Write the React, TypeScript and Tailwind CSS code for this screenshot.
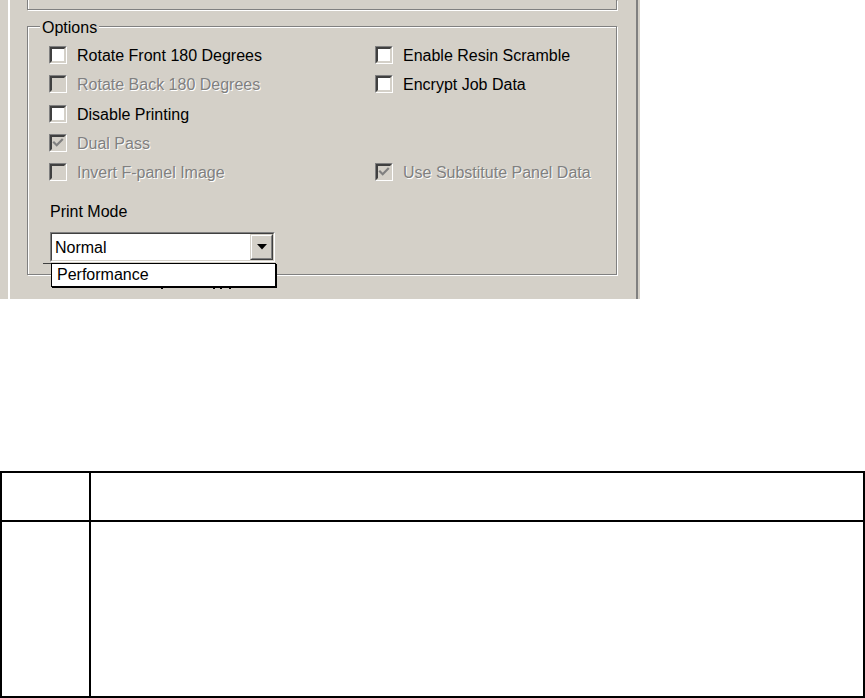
import React from 'react';

const FONT = "font-['Liberation_Sans',Arial,sans-serif]";

interface CheckProps {
  label?: string;
  checked?: boolean;
  disabled?: boolean;
}

const CheckBox: React.FC<CheckProps> = ({ label, checked, disabled }) => {
  if (!label) return <div />;
  return (
    <div className="flex h-[18px] items-center">
      <div className="h-[18px] w-[18px] shrink-0 border border-t-[#808080] border-l-[#808080] border-b-white border-r-white">
        <div
          className={`h-full w-full border-2 border-t-[#404040] border-l-[#404040] border-b-[#d4d0c8] border-r-[#d4d0c8] ${
            disabled ? 'bg-[#d4d0c8]' : 'bg-white'
          }`}
        >
          {checked && (
            <svg viewBox="0 0 12 12" className="h-full w-full">
              <path
                d="M2 5.5 L4.7 8.2 L10 2.8"
                fill="none"
                stroke={disabled ? '#808080' : '#000'}
                strokeWidth="2.2"
                strokeLinecap="square"
              />
            </svg>
          )}
        </div>
      </div>
      <span
        className={`ml-[10px] mt-[1px] whitespace-nowrap text-[16px] leading-[18px] ${
          disabled ? 'text-[#808080] [text-shadow:1px_1px_0_#fff]' : 'text-black'
        }`}
      >
        {label}
      </span>
    </div>
  );
};

const rows: [CheckProps, CheckProps][] = [
  [{ label: 'Rotate Front 180 Degrees' }, { label: 'Enable Resin Scramble' }],
  [{ label: 'Rotate Back 180 Degrees', disabled: true }, { label: 'Encrypt Job Data' }],
  [{ label: 'Disable Printing' }, {}],
  [{ label: 'Dual Pass', checked: true, disabled: true }, {}],
  [
    { label: 'Invert F-panel Image', disabled: true },
    { label: 'Use Substitute Panel Data', checked: true, disabled: true },
  ],
];

const rowHeights = ['h-[29px]', 'h-[30px]', 'h-[29px]', 'h-[29px]', 'h-[18px]'];

const PrintModeCombo: React.FC = () => (
  <div className="relative ml-[1px] mt-[11px] h-[30px] w-[225px]">
    <div className="h-full w-full border border-t-[#808080] border-l-[#808080] border-b-white border-r-white">
      <div className="flex h-full w-full border border-t-[#404040] border-l-[#404040] border-b-[#d4d0c8] border-r-[#d4d0c8] bg-white">
        <span className="flex-1 pl-[3px] pt-[1px] text-[16px] leading-[26px] text-black">Normal</span>
        <div className="h-full w-[23px] border border-t-[#d4d0c8] border-l-[#d4d0c8] border-b-[#404040] border-r-[#404040]">
          <div className="flex h-full w-full items-center justify-center border border-t-white border-l-white border-b-[#808080] border-r-[#808080] bg-[#d4d0c8]">
            <svg width="10" height="6" viewBox="0 0 10 6">
              <path d="M0 0 H10 L5 5.5 Z" fill="#000" />
            </svg>
          </div>
        </div>
      </div>
    </div>

    {/* hidden text peeking below the open list */}
    <div className="absolute left-[111px] top-[55px] h-[2px] w-[2px] bg-black" />
    <div className="absolute left-[163px] top-[55px] h-[2px] w-[2px] bg-black" />
    <div className="absolute left-[170px] top-[55px] h-[2px] w-[2px] bg-black" />
    <div className="absolute left-[179px] top-[55px] h-[2px] w-[2px] bg-black" />

    {/* open dropdown list */}
    <div className="absolute left-[-7px] top-[31px] h-[1px] w-[8px] bg-[#404040]" />
    <div className="absolute left-[1px] top-[31px] h-[24px] w-[225px] border border-black bg-white pl-[5px] shadow-[1px_1px_0_#000]">
      <span className="block pt-[1px] text-[16px] leading-[20px] text-black">Performance</span>
    </div>
  </div>
);

const App: React.FC = () => {
  return (
    <div className={`h-[698px] w-[865px] bg-white ${FONT}`}>
      <div className="h-[299px] w-[640px] bg-[#d4d0c8] pl-[8px]">
        <div className="h-full w-[630px] border-l-2 border-r-2 border-l-white border-r-[#808080] pl-[17px]">
          <div className="h-[10px] w-[590px] border-x border-b border-[#808080] shadow-[inset_1px_0_0_#fff,1px_1px_0_#fff]" />

          <div className="relative mt-[16px] h-[249px] w-[590px] border border-[#808080] pl-[21px] pt-[19px] shadow-[inset_1px_1px_0_#fff,1px_1px_0_#fff]">
            <span className="absolute left-[12px] top-[-8px] bg-[#d4d0c8] px-[2px] text-[16px] leading-[18px] text-black">
              Options
            </span>

            {rows.map((pair, i) => (
              <div key={i} className={`grid grid-cols-[326px_1fr] ${rowHeights[i]}`}>
                <CheckBox {...pair[0]} />
                <CheckBox {...pair[1]} />
              </div>
            ))}

            <div className="ml-[1px] mt-[22px] text-[16px] leading-[18px] text-black">Print Mode</div>
            <PrintModeCombo />
          </div>
        </div>
      </div>

      <div className="mt-[172px] h-[227px] w-[865px] border-2 border-black">
        <div className="grid h-[49px] grid-cols-[89px_1fr] border-b-2 border-black">
          <div className="border-r-2 border-black" />
          <div />
        </div>
        <div className="grid h-[174px] grid-cols-[89px_1fr]">
          <div className="border-r-2 border-black" />
          <div />
        </div>
      </div>
    </div>
  );
};

export default App;
